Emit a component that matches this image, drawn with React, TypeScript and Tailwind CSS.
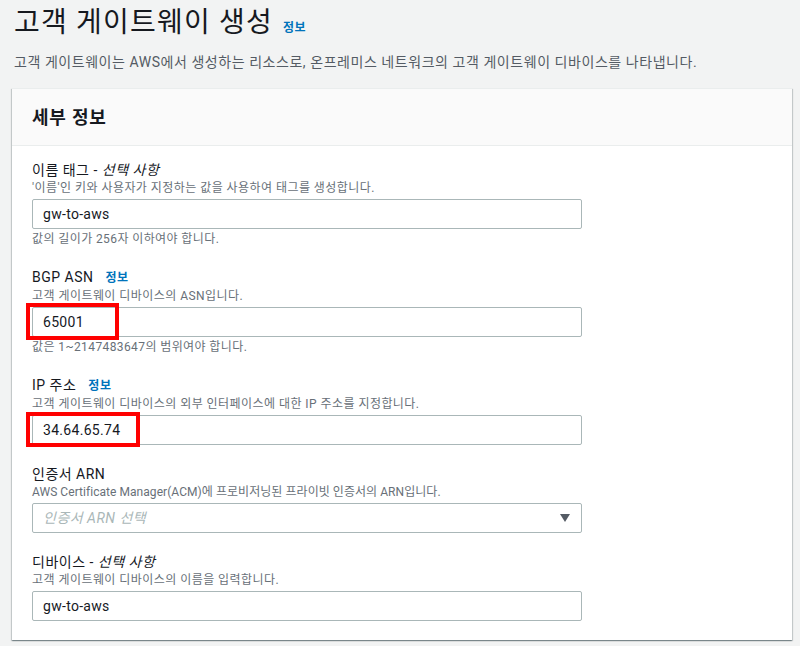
import React from "react";

const font = { fontFamily: 'Roboto, "Noto Sans CJK KR", sans-serif' };

function Info() {
  return <span className="ml-2 text-[12px] font-bold text-[#0073bb]">정보</span>;
}

function Field({
  label,
  desc,
  children,
  constraint,
  tightDesc,
}: {
  label: React.ReactNode;
  desc: string;
  children: React.ReactNode;
  constraint?: string;
  tightDesc?: boolean;
}) {
  return (
    <div className="flex flex-col">
      <div className="text-[14px] leading-[20px] tracking-[0.5px] text-[#16191f]">{label}</div>
      <div
        className={
          tightDesc
            ? "text-[12px] leading-[16px] tracking-[0.05px] text-[#687078]"
            : "text-[12px] leading-[16px] tracking-[0.45px] text-[#687078]"
        }
      >
        {desc}
      </div>
      <div className="mt-[3px]">{children}</div>
      {constraint && (
        <div className="mt-[2px] text-[12px] leading-[16px] tracking-[0.4px] text-[#687078]">{constraint}</div>
      )}
    </div>
  );
}

function Input({ value, highlight }: { value: string; highlight?: "a" | "b" }) {
  return (
    <div className="relative w-[550px]">
      <div className="flex h-[30px] items-center rounded-[2px] border border-[#aab7b8] bg-white px-[10px] text-[14px] tracking-[0.3px] text-[#16191f]">
        {value}
      </div>
      {highlight === "a" && (
        <div className="pointer-events-none absolute left-[-6px] top-[-4px] h-[37px] w-[93px] border-[4px] border-[#f00]" />
      )}
      {highlight === "b" && (
        <div className="pointer-events-none absolute left-[-6px] top-[-3px] h-[35px] w-[114px] border-[4px] border-[#f00]" />
      )}
    </div>
  );
}

export default function App() {
  return (
    <div style={font} className="min-h-[646px] w-[800px] bg-[#f2f3f3] pl-[12px]">
      <div className="flex items-baseline pl-[2px] pt-[4px]">
        <h1 className="text-[28px] leading-[38px] font-normal tracking-[1.2px] text-[#16191f]">고객 게이트웨이 생성</h1>
        <span className="ml-[10px] text-[12px] font-bold tracking-[0.4px] text-[#0073bb]">정보</span>
      </div>
      <p className="mt-[10px] pl-[2px] text-[14px] leading-[20px] tracking-[0.55px] text-[#545b64]">
        고객 게이트웨이는 AWS에서 생성하는 리소스로, 온프레미스 네트워크의 고객 게이트웨이 디바이스를 나타냅니다.
      </p>
      <div className="mt-[16px] w-[780px] border-t border-[#eaeded] bg-white shadow-[0_1px_1px_0_rgba(0,28,36,0.3),1px_1px_1px_0_rgba(0,28,36,0.15),-1px_1px_1px_0_rgba(0,28,36,0.15)]">
        <div className="flex h-[57px] items-center border-b border-[#eaeded] bg-[#fafafa] px-[20px]">
          <h2 className="text-[18px] font-bold tracking-[0.8px] text-[#16191f]">세부 정보</h2>
        </div>
        <div className="flex flex-col px-[20px] pb-[19px] pt-[14px]">
          <Field
            label={
              <>
                이름 태그 - <i>선택 사항</i>
              </>
            }
            desc="'이름'인 키와 사용자가 지정하는 값을 사용하여 태그를 생성합니다."
            constraint="값의 길이가 256자 이하여야 합니다."
          >
            <Input value="gw-to-aws" />
          </Field>
          <div className="mt-[20px]">
            <Field
              label={
                <>
                  BGP ASN <Info />
                </>
              }
              desc="고객 게이트웨이 디바이스의 ASN입니다."
              constraint="값은 1~2147483647의 범위여야 합니다."
            >
              <Input value="65001" highlight="a" />
            </Field>
          </div>
          <div className="mt-[20px]">
            <Field
              label={
                <>
                  IP 주소 <Info />
                </>
              }
              desc="고객 게이트웨이 디바이스의 외부 인터페이스에 대한 IP 주소를 지정합니다."
            >
              <Input value="34.64.65.74" highlight="b" />
            </Field>
          </div>
          <div className="mt-[19px]">
            <Field
              label="인증서 ARN"
              desc="AWS Certificate Manager(ACM)에 프로비저닝된 프라이빗 인증서의 ARN입니다."
              tightDesc
            >
              <div className="flex h-[30px] w-[550px] items-center justify-between rounded-[2px] border border-[#aab7b8] bg-white pl-[10px] pr-[11px] text-[14px] tracking-[0.5px]">
                <i className="text-[#aab7b8]">인증서 ARN 선택</i>
                <svg width="10" height="8" viewBox="0 0 10 8">
                  <polygon points="0,0 10,0 5,8" fill="#545b64" />
                </svg>
              </div>
            </Field>
          </div>
          <div className="mt-[19px]">
            <Field
              label={
                <>
                  디바이스 - <i>선택 사항</i>
                </>
              }
              desc="고객 게이트웨이 디바이스의 이름을 입력합니다."
            >
              <Input value="gw-to-aws" />
            </Field>
          </div>
        </div>
      </div>
    </div>
  );
}
